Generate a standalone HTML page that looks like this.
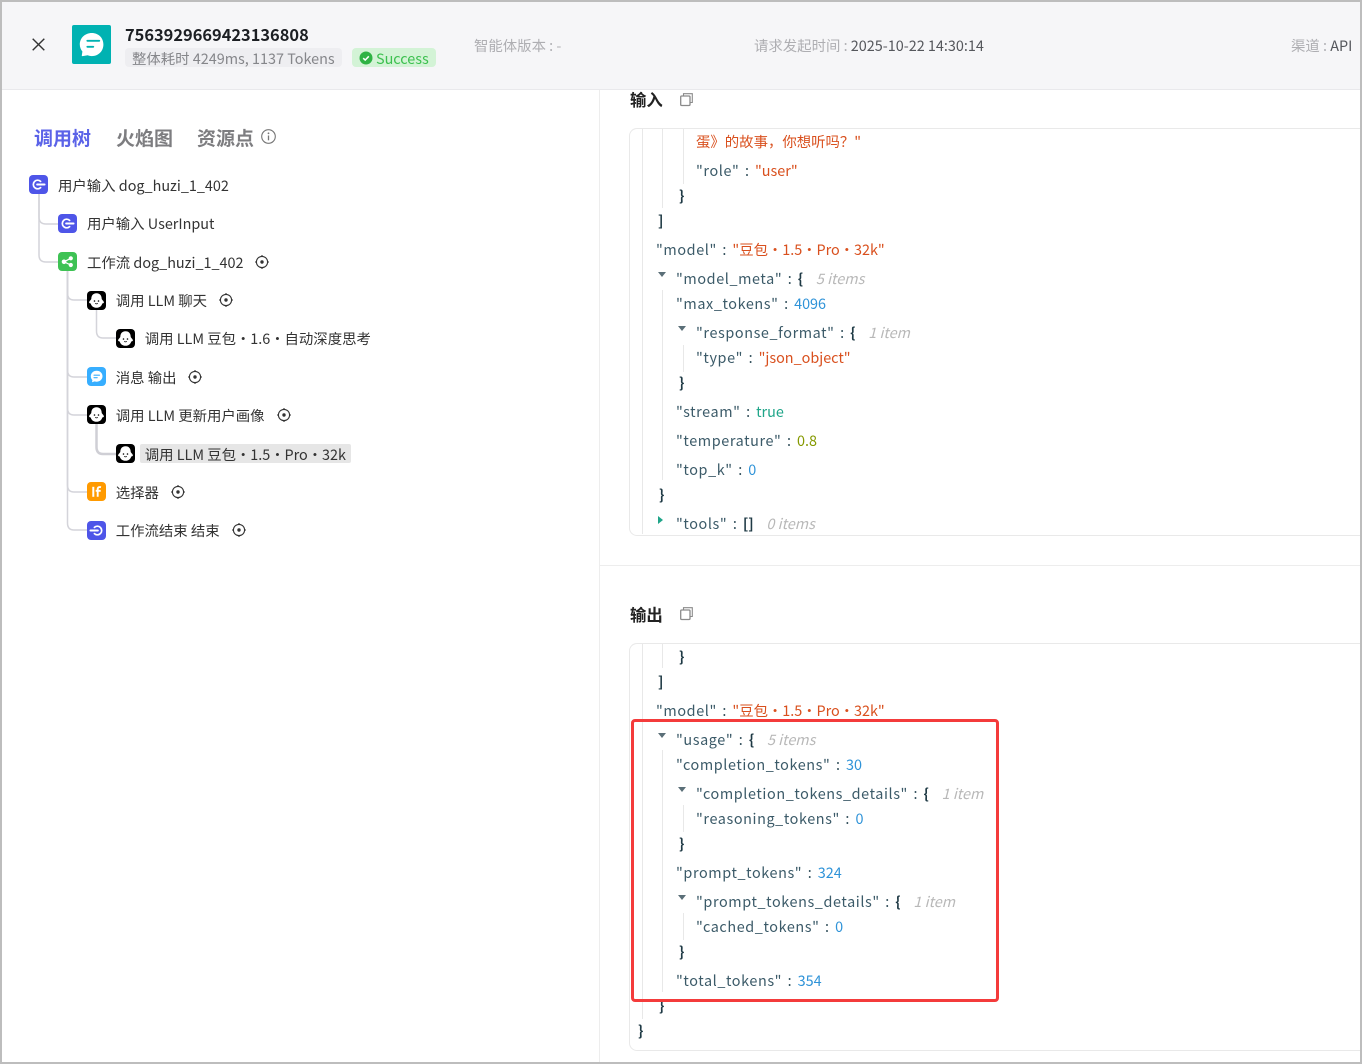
<!DOCTYPE html>
<html><head><meta charset="utf-8"><style>
html,body{margin:0;padding:0;background:#fff}
body{width:1362px;height:1064px;position:relative;overflow:hidden;font-family:"Noto Sans CJK SC","Liberation Sans",sans-serif;color:#333}
.t{position:absolute;white-space:pre;line-height:20px;font-size:14.4px}
.j{position:absolute;white-space:pre;line-height:20px;font-size:14.4px;color:#476582}
.k{color:#3b5a68;letter-spacing:.6px}.c{color:#1f3a45;font-weight:700}
.o{font-style:normal;color:#2c4a56;margin:0 6px 0 5.5px}
.s{color:#d9501e}.n{color:#2f93d8}.b{color:#1fa589}.f{color:#859900}
.m{color:#b8b8b8;font-style:italic;margin-left:3px}
.d{margin:0 -3.3px}
.v{position:absolute;width:1px;background:#e8e8e8}
.tri{position:absolute;width:0;height:0;border-left:4.5px solid transparent;border-right:4.5px solid transparent;border-top:5px solid #5b6f78}
svg{position:absolute;overflow:visible}
</style></head><body>
<svg width="0" height="0" style="position:absolute"><defs>
<g id="entry"><path d="M11.600 6.400A4.300 4.300 0 1 0 11.600 12.600" fill="none" stroke="#fff" stroke-width="1.700" stroke-linecap="round"/><path d="M8.200 9.500H15.500" stroke="#fff" stroke-width="2.100" stroke-linecap="round"/></g>
<g id="llm"><rect width="19" height="19" rx="4" fill="#000"/><path d="M9.500 2.200C5.900 2.200 4.300 4.800 4.300 7.800C4.300 8.800 2.300 9.800 2.100 11.400C2 12.200 3 12.300 3.700 12.500C4.500 15.300 6.700 16.800 9.500 16.800S14.500 15.300 15.300 12.500C16 12.300 17 12.200 16.900 11.400C16.700 9.800 14.700 8.800 14.700 7.800C14.700 4.800 13.100 2.200 9.500 2.200Z" fill="#fff"/><circle cx="7.500" cy="10" r=".8" fill="#000"/><circle cx="11.500" cy="10" r=".8" fill="#000"/><path d="M8.200 12.300Q9.500 13.400 10.800 12.300" stroke="#000" stroke-width=".7" fill="none"/></g>
<g id="tg"><circle cx="7" cy="7" r="5.600" fill="none" stroke="#333" stroke-width="1.100"/><circle cx="7" cy="7" r="1.700" fill="#333"/><path d="M7 0V2M7 12V14M0 7H2M12 7H14" stroke="#333" stroke-width="1.100"/></g>
<g id="copy"><path d="M3.500 3V.7H12.300V9.500H10" fill="none" stroke="#8a8a8a" stroke-width="1.100"/><rect x=".7" y="3" width="9.300" height="9.500" rx="1" fill="none" stroke="#8a8a8a" stroke-width="1.300"/></g>
</defs></svg>

<!-- header -->
<div style="position:absolute;left:2px;top:2px;width:1358px;height:87px;background:#f6f6f8;border-bottom:1px solid #e9e9ec"></div>
<svg style="left:32px;top:38px" width="13" height="13"><path d="M.7.7L12.300 12.300M12.300.7L.7 12.300" stroke="#333" stroke-width="1.400"/></svg>
<svg style="left:72px;top:25px" width="39" height="39"><rect width="39" height="39" rx="2" fill="#00b2b2"/><path d="M19.800 8C13.200 8 7.800 12.800 7.800 19.500C7.800 22.200 8.800 24.600 10.400 26.500L9.800 30.500C9.700 31 10.100 31.300 10.600 31.100L15.800 30.300C17 30.800 18.400 31.100 19.800 31.100C26.400 31.100 31.400 26.100 31.400 19.500C31.400 12.800 26.400 8 19.800 8Z" fill="#fff"/><path d="M15.300 15.800H27.300" stroke="#00b2b2" stroke-width="1.800" stroke-linecap="round"/><path d="M15.300 21.800H21.300" stroke="#00b2b2" stroke-width="1.800" stroke-linecap="round"/></svg>
<div class="t" style="left:125px;top:24px;font-size:16.4px;font-weight:700;color:#1c1f23">7563929669423136808</div>
<div style="position:absolute;left:125px;top:48px;width:217px;height:19px;background:#eeeef1;border-radius:4px"></div>
<div class="t" style="left:132px;top:49px;color:#85868a">整体耗时 4249ms, 1137 Tokens</div>
<div style="position:absolute;left:352px;top:48px;width:84px;height:19px;background:#d3f3d6;border-radius:4px"></div>
<svg style="left:359px;top:51px" width="14" height="14"><circle cx="7" cy="7" r="6.500" fill="#2fb344"/><path d="M4.200 7.200L6.200 9.100L9.800 5.300" stroke="#fff" stroke-width="1.500" fill="none"/></svg>
<div class="t" style="left:376px;top:49px;color:#3cc04f">Success</div>
<div class="t" style="left:474px;top:36px;color:#aeaeb2">智能体版本 : -</div>
<div class="t" style="left:754px;top:36px;color:#aeaeb2">请求发起时间 : <span style="color:#55575c">2025-10-22 14:30:14</span></div>
<div class="t" style="left:1291px;top:36px;color:#aeaeb2">渠道 : <span style="color:#55575c">API</span></div>

<!-- tabs -->
<div class="t" style="left:34px;top:128px;font-size:19px;font-weight:700;color:#5b63e8">调用树</div>
<div class="t" style="left:116px;top:128px;font-size:19px;font-weight:700;color:#7d7d80">火焰图</div>
<div class="t" style="left:197px;top:128px;font-size:19px;font-weight:700;color:#7d7d80">资源点</div>
<svg style="left:261px;top:129px" width="15" height="15"><circle cx="7.500" cy="7.500" r="6.800" fill="none" stroke="#777" stroke-width="1.100"/><circle cx="7.500" cy="4.300" r=".9" fill="#777"/><path d="M7.500 6.500V11.300" stroke="#777" stroke-width="1.300"/></svg>

<!-- tree lines -->
<svg style="left:0;top:0" width="400" height="560" fill="none" stroke="#d4d4da" stroke-width="1.500">
<path d="M39 194V217Q39 224 46 224H58"/>
<path d="M39 194V255Q39 262 46 262H58"/>
<path d="M67.500 271V293Q67.500 300 74 300H87"/>
<path d="M67.500 271V370Q67.500 377 74 377H87"/>
<path d="M67.500 271V408Q67.500 415 74 415H87"/>
<path d="M67.500 271V485Q67.500 492 74 492H87"/>
<path d="M67.500 271V523Q67.500 530 74 530H87"/>
<path d="M96.500 310V331Q96.500 338 103 338H116"/>
<path d="M96.500 424V447Q96.500 454 103 454H116" stroke="#cfcfd5" stroke-width="2.500"/>
</svg>

<!-- tree icons -->
<svg style="left:29px;top:175px" width="19" height="19"><rect width="19" height="19" rx="4" fill="#4e55e8"/><use href="#entry"/></svg>
<svg style="left:58px;top:214px" width="19" height="19"><rect width="19" height="19" rx="4" fill="#4e55e8"/><use href="#entry"/></svg>
<svg style="left:58px;top:252px" width="19" height="19"><rect width="19" height="19" rx="4" fill="#3ec254"/><circle cx="6" cy="9.800" r="2.300" fill="#fff"/><circle cx="12.800" cy="6.300" r="2.100" fill="#fff"/><circle cx="12.800" cy="13" r="2.100" fill="#fff"/><path d="M6 9.800L12.800 6.300M6 9.800L12.800 13" stroke="#fff" stroke-width="1.200"/></svg>
<svg style="left:87px;top:291px" width="19" height="19"><use href="#llm"/></svg>
<svg style="left:116px;top:329px" width="19" height="19"><use href="#llm"/></svg>
<svg style="left:87px;top:367px" width="19" height="19"><rect width="19" height="19" rx="4" fill="#37aeff"/><path d="M9.700 3.800C6.300 3.800 3.800 6.200 3.800 9.300C3.800 10.800 4.400 12.100 5.400 13.100L5 15.200L7.700 14.400C8.300 14.600 9 14.700 9.700 14.700C13 14.700 15.500 12.300 15.500 9.300C15.500 6.200 13 3.800 9.700 3.800Z" fill="#fff"/><path d="M7 8.200H12.500M7 10.700H10.200" stroke="#37aeff" stroke-width="1.100" stroke-linecap="round"/></svg>
<svg style="left:87px;top:405px" width="19" height="19"><use href="#llm"/></svg>
<svg style="left:116px;top:444px" width="19" height="19"><use href="#llm"/></svg>
<svg style="left:87px;top:482px" width="19" height="19"><rect width="19" height="19" rx="4" fill="#ff9a00"/><path d="M6.300 4.800V14.800" stroke="#fff" stroke-width="2"/><path d="M14 5.200C11.900 4.700 10.700 5.400 10.700 7.200V14.800M8.700 8.800H13.700" stroke="#fff" stroke-width="1.900" fill="none"/></svg>
<svg style="left:87px;top:521px" width="19" height="19"><rect width="19" height="19" rx="4" fill="#4e55e8"/><path d="M7.400 6.400A4.300 4.300 0 1 1 7.400 12.600" fill="none" stroke="#fff" stroke-width="1.700" stroke-linecap="round"/><path d="M3.500 9.500H10.800" stroke="#fff" stroke-width="2.100" stroke-linecap="round"/></svg>

<!-- tree labels -->
<div style="position:absolute;left:140px;top:444px;width:211px;height:19px;background:#e6e6e6;border-radius:2px"></div>
<div class="t" style="left:58px;top:176px">用户输入 dog_huzi_1_402</div>
<div class="t" style="left:87px;top:214px">用户输入 UserInput</div>
<div class="t" style="left:87px;top:253px">工作流 dog_huzi_1_402</div>
<div class="t" style="left:115.700px;top:291px">调用 LLM 聊天</div>
<div class="t" style="left:144.700px;top:329px">调用 LLM 豆包 <span class="d">·</span> 1.6 <span class="d">·</span> 自动深度思考</div>
<div class="t" style="left:115.700px;top:368px">消息 输出</div>
<div class="t" style="left:115.700px;top:406px">调用 LLM 更新用户画像</div>
<div class="t" style="left:144.700px;top:445px">调用 LLM 豆包 <span class="d">·</span> 1.5 <span class="d">·</span> Pro <span class="d">·</span> 32k</div>
<div class="t" style="left:115.700px;top:483px">选择器</div>
<div class="t" style="left:115.700px;top:521px">工作流结束 结束</div>
<svg style="left:255px;top:255px" width="14" height="14"><use href="#tg"/></svg>
<svg style="left:219px;top:293px" width="14" height="14"><use href="#tg"/></svg>
<svg style="left:188px;top:370px" width="14" height="14"><use href="#tg"/></svg>
<svg style="left:277px;top:408px" width="14" height="14"><use href="#tg"/></svg>
<svg style="left:171px;top:485px" width="14" height="14"><use href="#tg"/></svg>
<svg style="left:232px;top:523px" width="14" height="14"><use href="#tg"/></svg>

<!-- right pane -->
<div style="position:absolute;left:599px;top:90px;width:1px;height:972px;background:#ededed"></div>
<div style="position:absolute;left:600px;top:565px;width:760px;height:1px;background:#ededed"></div>
<div class="t" style="left:630px;top:89px;font-size:16.4px;font-weight:700;color:#222">输入</div>
<svg style="left:680px;top:93px" width="13" height="13"><use href="#copy"/></svg>
<div class="t" style="left:630px;top:604px;font-size:16.4px;font-weight:700;color:#222">输出</div>
<svg style="left:680px;top:607px" width="13" height="13"><use href="#copy"/></svg>

<div style="position:absolute;left:629px;top:128px;width:760px;height:406px;border:1px solid #e9e9e9;border-radius:8px"></div>
<div style="position:absolute;left:629px;top:643px;width:760px;height:406px;border:1px solid #e9e9e9;border-radius:8px"></div>

<!-- guides -->
<div class="v" style="left:642px;top:129px;height:405px"></div>
<div class="v" style="left:662px;top:129px;height:79px"></div>
<div class="v" style="left:683px;top:129px;height:55px"></div>
<div class="v" style="left:662px;top:290px;height:190px"></div>
<div class="v" style="left:683px;top:345px;height:27px"></div>
<div class="v" style="left:642px;top:644px;height:375px"></div>
<div class="v" style="left:662px;top:644px;height:24px"></div>
<div class="v" style="left:662px;top:750px;height:242px"></div>
<div class="v" style="left:683px;top:805px;height:27px"></div>
<div class="v" style="left:683px;top:913px;height:27px"></div>

<!-- input json -->
<div class="j" style="left:696px;top:132px"><span class="s">蛋》的故事，你想听吗？"</span></div>
<div class="j" style="left:696px;top:161px"><span class="k">"role"</span><i class="o">:</i><span class="s">"user"</span></div>
<div class="j c" style="left:679px;top:186px">}</div>
<div class="j c" style="left:658px;top:211px">]</div>
<div class="j" style="left:656px;top:240px"><span class="k">"model"</span><i class="o">:</i><span class="s">"豆包 <span class="d">·</span> 1.5 <span class="d">·</span> Pro <span class="d">·</span> 32k"</span></div>
<div class="tri" style="left:658px;top:272px"></div>
<div class="j" style="left:676px;top:269px"><span class="k">"model_meta"</span><i class="o">:</i><span class="c">{</span>   <span class="m">5 items</span></div>
<div class="j" style="left:676px;top:294px"><span class="k">"max_tokens"</span><i class="o">:</i><span class="n">4096</span></div>
<div class="tri" style="left:678px;top:326px"></div>
<div class="j" style="left:696px;top:323px"><span class="k">"response_format"</span><i class="o">:</i><span class="c">{</span>   <span class="m">1 item</span></div>
<div class="j" style="left:696px;top:348px"><span class="k">"type"</span><i class="o">:</i><span class="s">"json_object"</span></div>
<div class="j c" style="left:679px;top:373px">}</div>
<div class="j" style="left:676px;top:402px"><span class="k">"stream"</span><i class="o">:</i><span class="b">true</span></div>
<div class="j" style="left:676px;top:431px"><span class="k">"temperature"</span><i class="o">:</i><span class="f">0.8</span></div>
<div class="j" style="left:676px;top:460px"><span class="k">"top_k"</span><i class="o">:</i><span class="n">0</span></div>
<div class="j c" style="left:659px;top:485px">}</div>
<div style="position:absolute;left:658px;top:516px;width:0;height:0;border-top:4px solid transparent;border-bottom:4px solid transparent;border-left:5px solid #1fa589"></div>
<div class="j" style="left:676px;top:514px"><span class="k">"tools"</span><i class="o">:</i><span class="c">[]</span>   <span class="m">0 items</span></div>

<!-- output json -->
<div class="j c" style="left:679px;top:647px">}</div>
<div class="j c" style="left:658px;top:672px">]</div>
<div class="j" style="left:656px;top:701px"><span class="k">"model"</span><i class="o">:</i><span class="s">"豆包 <span class="d">·</span> 1.5 <span class="d">·</span> Pro <span class="d">·</span> 32k"</span></div>
<div class="tri" style="left:658px;top:733px"></div>
<div class="j" style="left:676px;top:730px"><span class="k">"usage"</span><i class="o">:</i><span class="c">{</span>   <span class="m">5 items</span></div>
<div class="j" style="left:676px;top:755px"><span class="k">"completion_tokens"</span><i class="o">:</i><span class="n">30</span></div>
<div class="tri" style="left:678px;top:787px"></div>
<div class="j" style="left:696px;top:784px"><span class="k">"completion_tokens_details"</span><i class="o">:</i><span class="c">{</span>   <span class="m">1 item</span></div>
<div class="j" style="left:696px;top:809px"><span class="k">"reasoning_tokens"</span><i class="o">:</i><span class="n">0</span></div>
<div class="j c" style="left:679px;top:834px">}</div>
<div class="j" style="left:676px;top:863px"><span class="k">"prompt_tokens"</span><i class="o">:</i><span class="n">324</span></div>
<div class="tri" style="left:678px;top:895px"></div>
<div class="j" style="left:696px;top:892px"><span class="k">"prompt_tokens_details"</span><i class="o">:</i><span class="c">{</span>   <span class="m">1 item</span></div>
<div class="j" style="left:696px;top:917px"><span class="k">"cached_tokens"</span><i class="o">:</i><span class="n">0</span></div>
<div class="j c" style="left:679px;top:942px">}</div>
<div class="j" style="left:676px;top:971px"><span class="k">"total_tokens"</span><i class="o">:</i><span class="n">354</span></div>
<div class="j c" style="left:659px;top:996px">}</div>
<div class="j c" style="left:638px;top:1021px">}</div>

<div style="position:absolute;left:631px;top:719px;width:362px;height:277px;border:3px solid #f43b3b;border-radius:4px"></div>

<!-- frame -->
<div style="position:absolute;left:0;top:0;width:1358px;height:1060px;border:2px solid #bdbdbd;pointer-events:none"></div>
</body></html>
